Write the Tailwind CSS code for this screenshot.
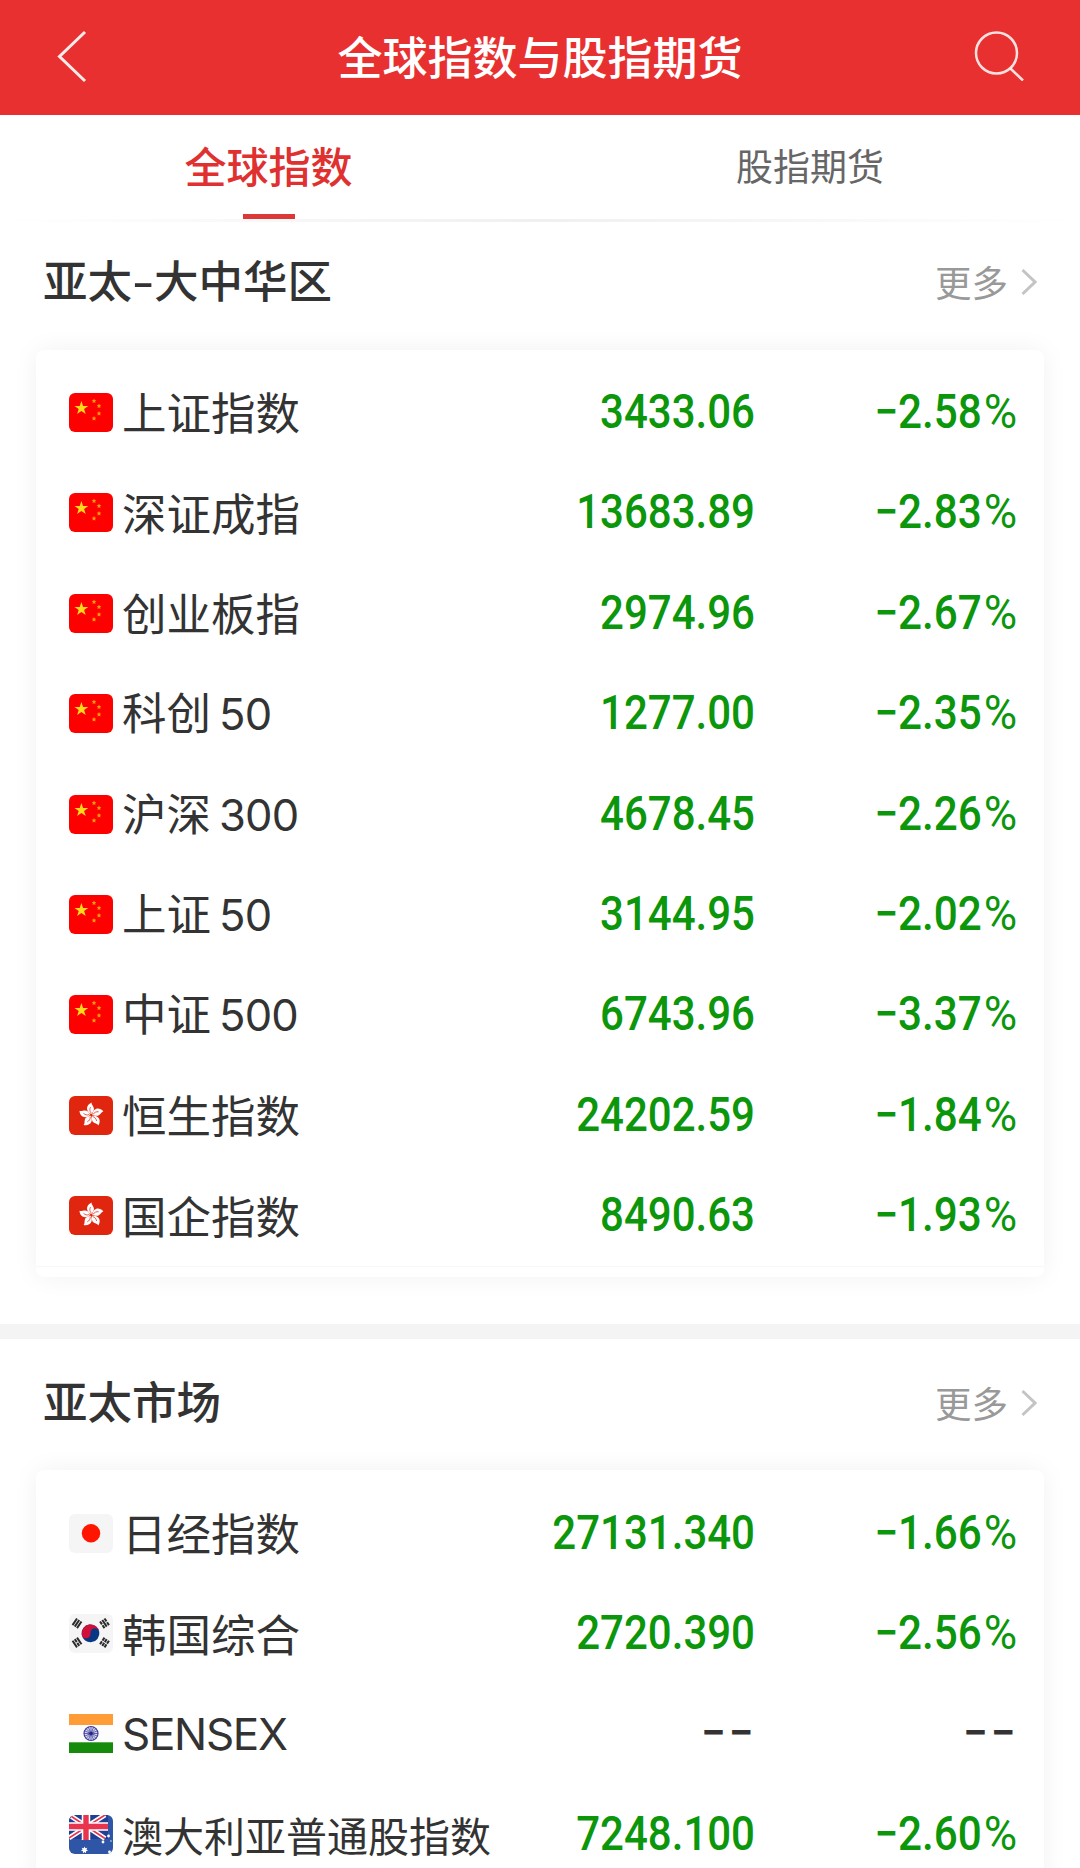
<!DOCTYPE html>
<html lang="zh-CN">
<head>
<meta charset="utf-8">
<title>全球指数与股指期货</title>
<script src="https://cdn.jsdelivr.net/npm/@tailwindcss/browser@4"></script>
</head>
<body class="w-[1080px] h-[1868px] overflow-hidden bg-white text-[#333] font-['Noto_Sans_CJK_SC',sans-serif]">
<svg class="hidden">
  <defs>
    <clipPath id="round"><rect width="44" height="39" rx="6"/></clipPath>
    <symbol id="cn" viewBox="0 0 44 39"><rect width="44" height="39" rx="6" fill="#fe0000"/>
      <path fill="#ffd91a" d="M12.400 8l1.700 4.900h5.200l-4.200 3 1.600 5-4.300-3-4.300 3 1.600-5-4.200-3h5.200z"/>
      <g fill="#ff9d0a"><path id="st" d="M25 5.500l.7 1.500 1.600.2-1.200 1.100 .4 1.700-1.500-.8-1.500.8.4-1.700-1.200-1.100 1.600-.2z"/><use href="#st" x="5" y="5"/><use href="#st" x="5" y="12.500"/><use href="#st" y="17.500"/></g>
    </symbol>
    <symbol id="hk" viewBox="0 0 44 39"><rect width="44" height="39" rx="6" fill="#e1260f"/>
      <g transform="translate(22.300 19) rotate(-2)"><g id="pt"><path fill="#fff" d="M0 -1C-5.500 -4-5.500 -10 0.800 -12.600C0 -10.500 4 -8 2.600 -4.600C1.800 -2.800 .8 -2 0 -1z"/><path d="M0 -2C-1.700-4-1.500-6-.5-8" fill="none" stroke="#e1260f" stroke-width=".7"/></g>
      <use href="#pt" transform="rotate(72)"/><use href="#pt" transform="rotate(144)"/><use href="#pt" transform="rotate(216)"/><use href="#pt" transform="rotate(288)"/></g>
    </symbol>
    <symbol id="jp" viewBox="0 0 44 39"><rect width="44" height="39" rx="6" fill="#f5f5f5"/><circle cx="22" cy="19.300" r="9.200" fill="#ff1500"/></symbol>
    <symbol id="kr" viewBox="0 0 44 39"><rect width="44" height="39" rx="6" fill="#f5f5f5"/>
      <g transform="rotate(-8 21.500 19.300)"><circle cx="21.500" cy="19.300" r="8.900" fill="#0a3783"/><path fill="#d0103a" d="M12.600 19.300a8.900 8.900 0 0 1 17.800 0a4.450 4.450 0 0 0-8.900 0a4.450 4.450 0 0 1-8.900 0z"/></g>
      <g stroke="#2b2b2b" stroke-width="2">
        <g transform="translate(8 9.300) rotate(-56)"><path d="M-4 -2.700h8M-4 0h8M-4 2.700h8"/></g>
        <g transform="translate(35.500 9.300) rotate(56)"><path d="M-4 -2.700h3.500M.5 -2.700h3.500M-4 0h8M-4 2.700h3.500M.5 2.700h3.500"/></g>
        <g transform="translate(8 28.500) rotate(56)"><path d="M-4 -2.700h8M-4 0h3.500M.5 0h3.500M-4 2.700h8"/></g>
        <g transform="translate(35.500 28.500) rotate(-56)"><path d="M-4 -2.700h3.500M.5 -2.700h3.500M-4 0h3.500M.5 0h3.500M-4 2.700h3.500M.5 2.700h3.500"/></g>
      </g>
    </symbol>
    <symbol id="in" viewBox="0 0 44 39"><g clip-path="url(#round)"><rect width="44" height="39" fill="#fdfdfd"/><rect width="44" height="11" fill="#ff9c37"/><rect y="28.300" width="44" height="11" fill="#158a0b"/></g>
      <g stroke="#3f3f99" fill="none"><circle cx="22" cy="19.500" r="7" stroke-width="1.200" fill="#dcdcf2"/><path stroke-width=".8" d="M22 12.500v14M15 19.500h14M17 14.500l10 10M27 14.500l-10 10M19.300 13l5.400 13M24.700 13l-5.400 13M15.500 16.800l13 5.400M15.500 22.200l13-5.400"/></g><circle cx="22" cy="19.500" r="1.800" fill="#26268a"/>
    </symbol>
    <symbol id="au" viewBox="0 0 44 39"><rect width="44" height="39" rx="6" fill="#2f56a6"/>
      <path d="M6 0H39V24H0V6A6 6 0 0 1 6 0z" fill="#1f3f95"/>
      <path d="M2.500 1.500L36 23.500M36 0L0 23" stroke="#fff" stroke-width="5"/><path d="M2.500 1.500L36 23.500M36 0L0 23" stroke="#e8344f" stroke-width="1.600"/>
      <path d="M17 0v25M0 11.500h39" stroke="#fff" stroke-width="8.500"/><path d="M17 0v25M0 11.500h39" stroke="#e8344f" stroke-width="5.400"/>
      <g fill="#fff"><path d="M15.500 31.500l.8 1.800 2-.5-.9 1.800 1.600 1.200-2 .4v2l-1.500-1.300-1.500 1.300v-2l-2-.4 1.600-1.200-.9-1.800 2 .5z"/><circle cx="34" cy="27" r="1.400"/><circle cx="39.500" cy="21" r="1.400"/><circle cx="40.500" cy="37" r="1.400"/><circle cx="42" cy="26" r=".7"/></g>
    </symbol>
  </defs>
</svg>

<header class="flex h-[115px] items-center justify-between bg-[#e83030] pb-[4px] pl-[57px] pr-[56px] text-white">
  <svg class="h-[54px] w-[30px]" viewBox="0 0 30 54" fill="none" stroke="#fff" stroke-opacity=".9" stroke-width="3"><path d="M28 3L2.500 27.500 28 52"/></svg>
  <h1 class="pl-[19px] text-[45px] leading-[60px] font-medium">全球指数与股指期货</h1>
  <svg class="h-[50px] w-[50px]" viewBox="0 0 50 50" fill="none" stroke="#fff" stroke-opacity=".85" stroke-width="2.500"><circle cx="22.500" cy="22" r="20.500"/><path d="M36.500 37.500L49 49.500"/></svg>
</header>

<nav class="grid h-[104px] grid-cols-2 text-center">
  <div class="flex flex-col items-center justify-between pt-[19px] pr-[3px] text-[42px] leading-[62px] font-medium text-[#e03131]"><span>全球指数</span><i class="block h-[5px] w-[52px] bg-[#dc3838]"></i></div>
  <div class="pt-[19px] text-[37px] leading-[62px] text-[#666]">股指期货</div>
</nav>
<div class="h-[6px]"><div class="h-[3px] bg-linear-to-r from-white via-[#f0f0f0] to-white"></div></div>

<section class="h-[1099px]">
  <div class="flex h-[125px] items-center justify-between pl-[43px] pr-[43px] pb-[12px]">
    <h2 class="pb-[6px] text-[44.500px] leading-[60px] font-medium">亚太<span class="inline-block w-[22px] origin-left scale-x-[1.400]">-</span>大中华区</h2>
    <div class="flex items-center gap-[12px] text-[36.500px] leading-[60px] text-[#999]">更多<svg class="h-[28px] w-[17px]" viewBox="0 0 17 28" fill="none" stroke="#c4c4c4" stroke-width="3"><path d="M2.500 2l12.500 12L2.500 26"/></svg></div>
  </div>
  <div class="mx-[36px] h-[927px] rounded-[8px] bg-white pt-[12.300px] shadow-[0_0_26px_rgba(0,0,0,0.06)]">
    <div class="grid auto-rows-[100.400px] border-b border-[#f8f8f8] [&>div]:grid [&>div]:grid-cols-[1fr_250px_262px] [&>div]:items-center [&>div]:pl-[33px] [&>div]:pr-[27px] [&_p]:flex [&_p]:items-center [&_p]:gap-[9px] [&_p]:text-[44.500px] [&_p]:leading-[60px] [&_p>span]:pb-[2px] [&_em]:pl-[8px] [&_em]:not-italic [&_em]:text-[43.500px] [&_em]:tracking-[-0.800px] [&_em]:font-['Inter',sans-serif] [&_svg]:h-[39px] [&_svg]:w-[44px] [&_svg]:shrink-0 [&_b]:block [&_b]:pb-[1px] [&_b]:text-right [&_b]:origin-right [&_b]:scale-x-[0.875] [&_b]:font-['Roboto',sans-serif] [&_b]:font-medium [&_b]:text-[48px] [&_b]:leading-[60px] [&_b]:text-[#0b960b] [&_b:last-child]:scale-x-[0.880] [&_i]:ml-[5px] [&_i]:inline-block [&_i]:origin-right [&_i]:scale-x-[1.080] [&_i]:font-normal [&_i]:not-italic">
      <div><p><svg><use href="#cn"/></svg><span>上证指数</span></p><b>3433.06</b><b>−2.58<i>%</i></b></div>
      <div><p><svg><use href="#cn"/></svg><span>深证成指</span></p><b>13683.89</b><b>−2.83<i>%</i></b></div>
      <div><p><svg><use href="#cn"/></svg><span>创业板指</span></p><b>2974.96</b><b>−2.67<i>%</i></b></div>
      <div><p><svg><use href="#cn"/></svg><span>科创<em>50</em></span></p><b>1277.00</b><b>−2.35<i>%</i></b></div>
      <div><p><svg><use href="#cn"/></svg><span>沪深<em>300</em></span></p><b>4678.45</b><b>−2.26<i>%</i></b></div>
      <div><p><svg><use href="#cn"/></svg><span>上证<em>50</em></span></p><b>3144.95</b><b>−2.02<i>%</i></b></div>
      <div><p><svg><use href="#cn"/></svg><span>中证<em>500</em></span></p><b>6743.96</b><b>−3.37<i>%</i></b></div>
      <div><p><svg><use href="#hk"/></svg><span>恒生指数</span></p><b>24202.59</b><b>−1.84<i>%</i></b></div>
      <div><p><svg><use href="#hk"/></svg><span>国企指数</span></p><b>8490.63</b><b>−1.93<i>%</i></b></div>
    </div>
  </div>
</section>

<div class="h-[15px] bg-[#f4f4f4]"></div>

<section class="h-[529px] overflow-hidden">
  <div class="flex h-[131px] items-center justify-between pl-[43px] pr-[43px] pb-[4px]">
    <h2 class="pb-[6px] text-[44.500px] leading-[60px] font-medium">亚太市场</h2>
    <div class="flex items-center gap-[12px] text-[36.500px] leading-[60px] text-[#999]">更多<svg class="h-[28px] w-[17px]" viewBox="0 0 17 28" fill="none" stroke="#c4c4c4" stroke-width="3"><path d="M2.500 2l12.500 12L2.500 26"/></svg></div>
  </div>
  <div class="mx-[36px] h-[500px] rounded-[8px] bg-white pt-[13px] shadow-[0_0_26px_rgba(0,0,0,0.06)]">
    <div class="grid auto-rows-[100.400px] [&>div]:grid [&>div]:grid-cols-[1fr_250px_262px] [&>div]:items-center [&>div]:pl-[33px] [&>div]:pr-[27px] [&_p]:flex [&_p]:items-center [&_p]:gap-[9px] [&_p]:text-[44.500px] [&_p]:leading-[60px] [&_p>span]:pb-[2px] [&_svg]:h-[39px] [&_svg]:w-[44px] [&_svg]:shrink-0 [&_b]:block [&_b]:pb-[1px] [&_b]:text-right [&_b]:origin-right [&_b]:scale-x-[0.875] [&_b]:font-['Roboto',sans-serif] [&_b]:font-medium [&_b]:text-[48px] [&_b]:leading-[60px] [&_b]:text-[#0b960b] [&_b:last-child]:scale-x-[0.880] [&_i]:ml-[5px] [&_i]:inline-block [&_i]:origin-right [&_i]:scale-x-[1.080] [&_i]:font-normal [&_i]:not-italic">
      <div><p><svg><use href="#jp"/></svg><span>日经指数</span></p><b>27131.340</b><b>−1.66<i>%</i></b></div>
      <div><p><svg><use href="#kr"/></svg><span>韩国综合</span></p><b>2720.390</b><b>−2.56<i>%</i></b></div>
      <div><p><svg><use href="#in"/></svg><span class="pt-[3px] font-['Inter',sans-serif] text-[44px] tracking-[-1.300px]">SENSEX</span></p><b class="mr-[-1px] scale-x-[0.920]! tracking-[3px]! text-[#333]!">−−</b><b class="mr-[-1px] scale-x-[0.920]! tracking-[3px]! text-[#333]!">−−</b></div>
      <div><p><svg><use href="#au"/></svg><span class="pt-[2px] text-[41px]">澳大利亚普通股指数</span></p><b>7248.100</b><b>−2.60<i>%</i></b></div>
    </div>
  </div>
</section>
</body>
</html>
